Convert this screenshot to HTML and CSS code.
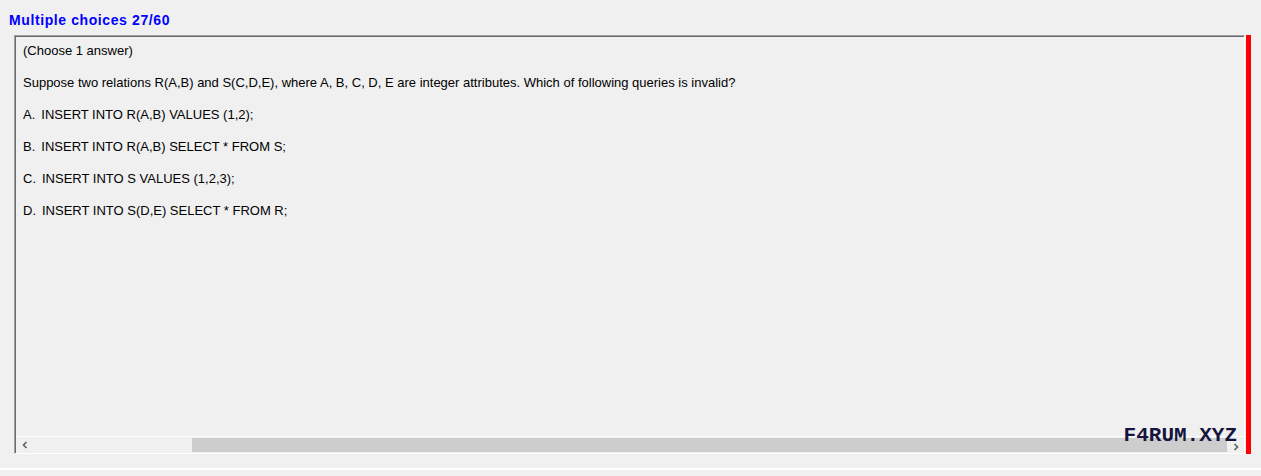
FILE: index.html
```html
<!DOCTYPE html>
<html>
<head>
<meta charset="utf-8">
<link rel="stylesheet" href="styles.css">
</head>
<body>
<div class="title">Multiple choices 27/60</div>
<div class="row">
  <div class="box">
    <div class="content">
      <p>(Choose 1 answer)</p>
      <p>Suppose two relations R(A,B) and S(C,D,E), where A, B, C, D, E are integer attributes. Which of following queries is invalid?</p>
      <p><span class="lbl">A.</span>INSERT INTO R(A,B) VALUES (1,2);</p>
      <p><span class="lbl">B.</span>INSERT INTO R(A,B) SELECT * FROM S;</p>
      <p><span class="lbl">C.</span>INSERT INTO S VALUES (1,2,3);</p>
      <p><span class="lbl">D.</span>INSERT INTO S(D,E) SELECT * FROM R;</p>
    </div>
    <div class="hscroll">
      <div class="arrow left"><svg width="8" height="8" viewBox="0 0 8 8"><path d="M5.5 1 L2.5 4 L5.5 7" fill="none" stroke="#606060" stroke-width="1.6"/></svg></div>
      <div class="track"><div class="thumb"></div></div>
      <div class="arrow right"><svg width="8" height="8" viewBox="0 0 8 8"><path d="M2.5 1 L5.5 4 L2.5 7" fill="none" stroke="#606060" stroke-width="1.6"/></svg></div>
    </div>
    <div class="watermark">F4RUM.XYZ</div>
  </div>
  <div class="redbar"></div>
</div>
<div class="bottomline"></div>
</body>
</html>
```

FILE: styles.css
```css
html, body {
  margin: 0;
  padding: 0;
  background: #f0f0f0;
  height: 476px;
  overflow: hidden;
}
.title {
  font-family: "Liberation Sans", Arial, sans-serif;
  font-weight: bold;
  font-size: 14px;
  letter-spacing: 0.6px;
  color: #0000ff;
  padding: 12px 0 0 9px;
  height: 23px;
  line-height: 17px;
  box-sizing: border-box;
}
.row {
  display: flex;
  margin-left: 14px;
  margin-top: 12px;
  gap: 1px;
  height: 419px;
}
.box {
  position: relative;
  width: 1231px;
  height: 419px;
  box-sizing: border-box;
  border-top: 1px solid #a0a0a0;
  border-left: 1px solid #a0a0a0;
  border-right: 1px solid #ffffff;
  border-bottom: 1px solid #ffffff;
  box-shadow: inset 1px 1px 0 #696969;
  display: flex;
  flex-direction: column;
}
.content {
  flex: 1;
  padding: 7px 0 0 8px;
  font-family: "Liberation Sans", Arial, sans-serif;
  font-size: 13px;
  color: #000;
}
.content p {
  margin: 0 0 17px 0;
  line-height: 15px;
}
.lbl {
  margin-right: 6px;
}
.hscroll {
  display: flex;
  align-items: stretch;
  height: 17px;
  margin-left: 1px;
  border-top: 1px solid #ffffff;
  box-sizing: border-box;
  background: #f0f0f0;
}
.arrow {
  width: 17px;
  display: flex;
  align-items: center;
  justify-content: center;
}
.arrow.left { width: 17px; }
.arrow.right { width: 17px; padding-top: 4px; box-sizing: border-box; }
.track {
  flex: 1;
  display: flex;
  padding: 1px 0 0 159px;
}
.thumb {
  flex: 1;
  height: 14px;
  background: #cdcdcd;
}
.watermark {
  position: absolute;
  right: 7px;
  bottom: 7px;
  font-family: "Liberation Mono", "DejaVu Sans Mono", monospace;
  font-weight: bold;
  font-size: 21px;
  line-height: 20px;
  color: #15153d;
}
.redbar {
  width: 5px;
  height: 419px;
  background: #ff0000;
}
.bottomline {
  margin-top: 14px;
  height: 2px;
  background: #ffffff;
}
```
